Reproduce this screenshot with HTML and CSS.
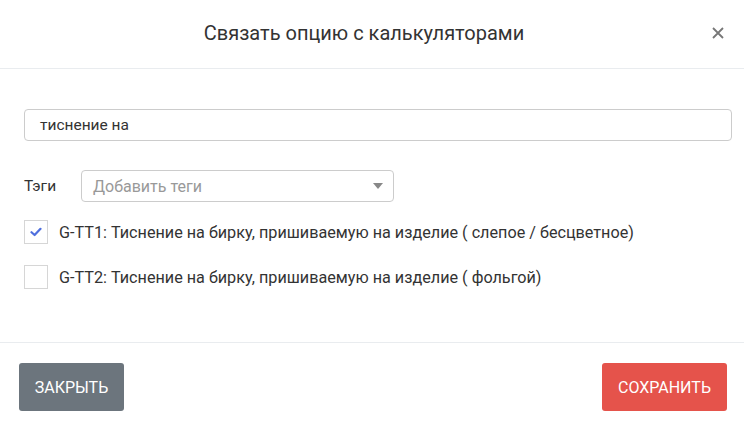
FILE: index.html
```html
<!DOCTYPE html>
<html lang="ru">
<head>
<meta charset="utf-8">
<link rel="stylesheet" href="styles.css">
</head>
<body>
<div class="modal">
  <div class="modal-header">
    <div class="modal-title">Связать опцию с калькуляторами</div>
    <button class="close" aria-label="close">
      <svg width="12" height="12" viewBox="0 0 12 12"><path d="M1 1L11 11M11 1L1 11" stroke="#777" stroke-width="1.8" fill="none"/></svg>
    </button>
  </div>
  <div class="modal-body">
    <div class="search">тиснение на</div>
    <div class="tags-row">
      <span class="tags-label">Тэги</span>
      <div class="select">
        <span class="placeholder">Добавить теги</span>
        <svg class="caret" width="10" height="6" viewBox="0 0 10 6"><path d="M0 0H10L5 6Z" fill="#888"/></svg>
      </div>
    </div>
    <div class="check-list">
      <label class="check-item">
        <span class="box checked">
          <svg width="12" height="10" viewBox="0 0 12 10"><path d="M1.5 5.2L4.6 8L10.5 1.8" stroke="#4f6fde" stroke-width="2.2" fill="none" stroke-linecap="round" stroke-linejoin="round"/></svg>
        </span>
        <span class="check-text">G-TT1: Тиснение на бирку, пришиваемую на изделие ( слепое / бесцветное)</span>
      </label>
      <label class="check-item">
        <span class="box"></span>
        <span class="check-text">G-TT2: Тиснение на бирку, пришиваемую на изделие ( фольгой)</span>
      </label>
    </div>
  </div>
  <div class="modal-footer">
    <button class="btn btn-grey">ЗАКРЫТЬ</button>
    <button class="btn btn-red">СОХРАНИТЬ</button>
  </div>
</div>
</body>
</html>
```
FILE: styles.css
```css
* { box-sizing: border-box; }
html, body { margin: 0; padding: 0; background: #fff; }
body { font-family: Roboto, "Noto Sans", sans-serif; color: #333; width: 744px; height: 429px; overflow: hidden; }
.modal { width: 744px; }
.modal-header {
  height: 69px;
  border-bottom: 1px solid #e9ecef;
  display: flex;
  align-items: center;
  justify-content: center;
  position: relative;
}
.modal-title { font-size: 20px; color: #333; padding-right: 16px; padding-bottom: 2px; }
.close {
  position: absolute;
  right: 20px;
  top: 27px;
  background: none;
  border: 0;
  padding: 0;
  width: 12px;
  height: 12px;
  display: flex;
}
.modal-body { padding: 40px 12px 0 24px; height: 273px; }
.search {
  height: 32px;
  border: 1px solid #ccc;
  border-radius: 4px;
  padding: 0 15px;
  font-size: 15.5px;
  line-height: 30px;
  color: #333;
}
.tags-row { display: flex; align-items: center; margin-top: 29px; gap: 24px; }
.tags-label { font-size: 15.5px; color: #333; width: 33px; }
.select {
  width: 313px;
  height: 32px;
  border: 1px solid #ccc;
  border-radius: 4px;
  display: flex;
  align-items: center;
  justify-content: space-between;
  padding: 0 10px 0 11px;
}
.placeholder { font-size: 16px; color: #999; }
.check-list { margin-top: 18px; display: flex; flex-direction: column; gap: 21px; }
.check-item { display: flex; align-items: center; gap: 11px; }
.box {
  width: 24px; height: 24px;
  border: 1px solid #d6d6d6;
  display: flex; align-items: center; justify-content: center;
  flex: none;
}
.check-text { font-size: 16.2px; color: #333; }
.modal-footer {
  border-top: 1px solid #e9ecef;
  height: 87px;
  display: flex;
  justify-content: space-between;
  align-items: flex-start;
  padding: 20px 17px 0 19px;
}
.btn {
  height: 48px;
  border: 0;
  border-radius: 3px;
  color: #fff;
  font-family: Roboto, sans-serif;
  font-size: 16px;
  padding: 0 15px;
}
.btn-grey { background: #6c757d; width: 105px; }
.btn-red { background: #e5534b; width: 125px; }
```
